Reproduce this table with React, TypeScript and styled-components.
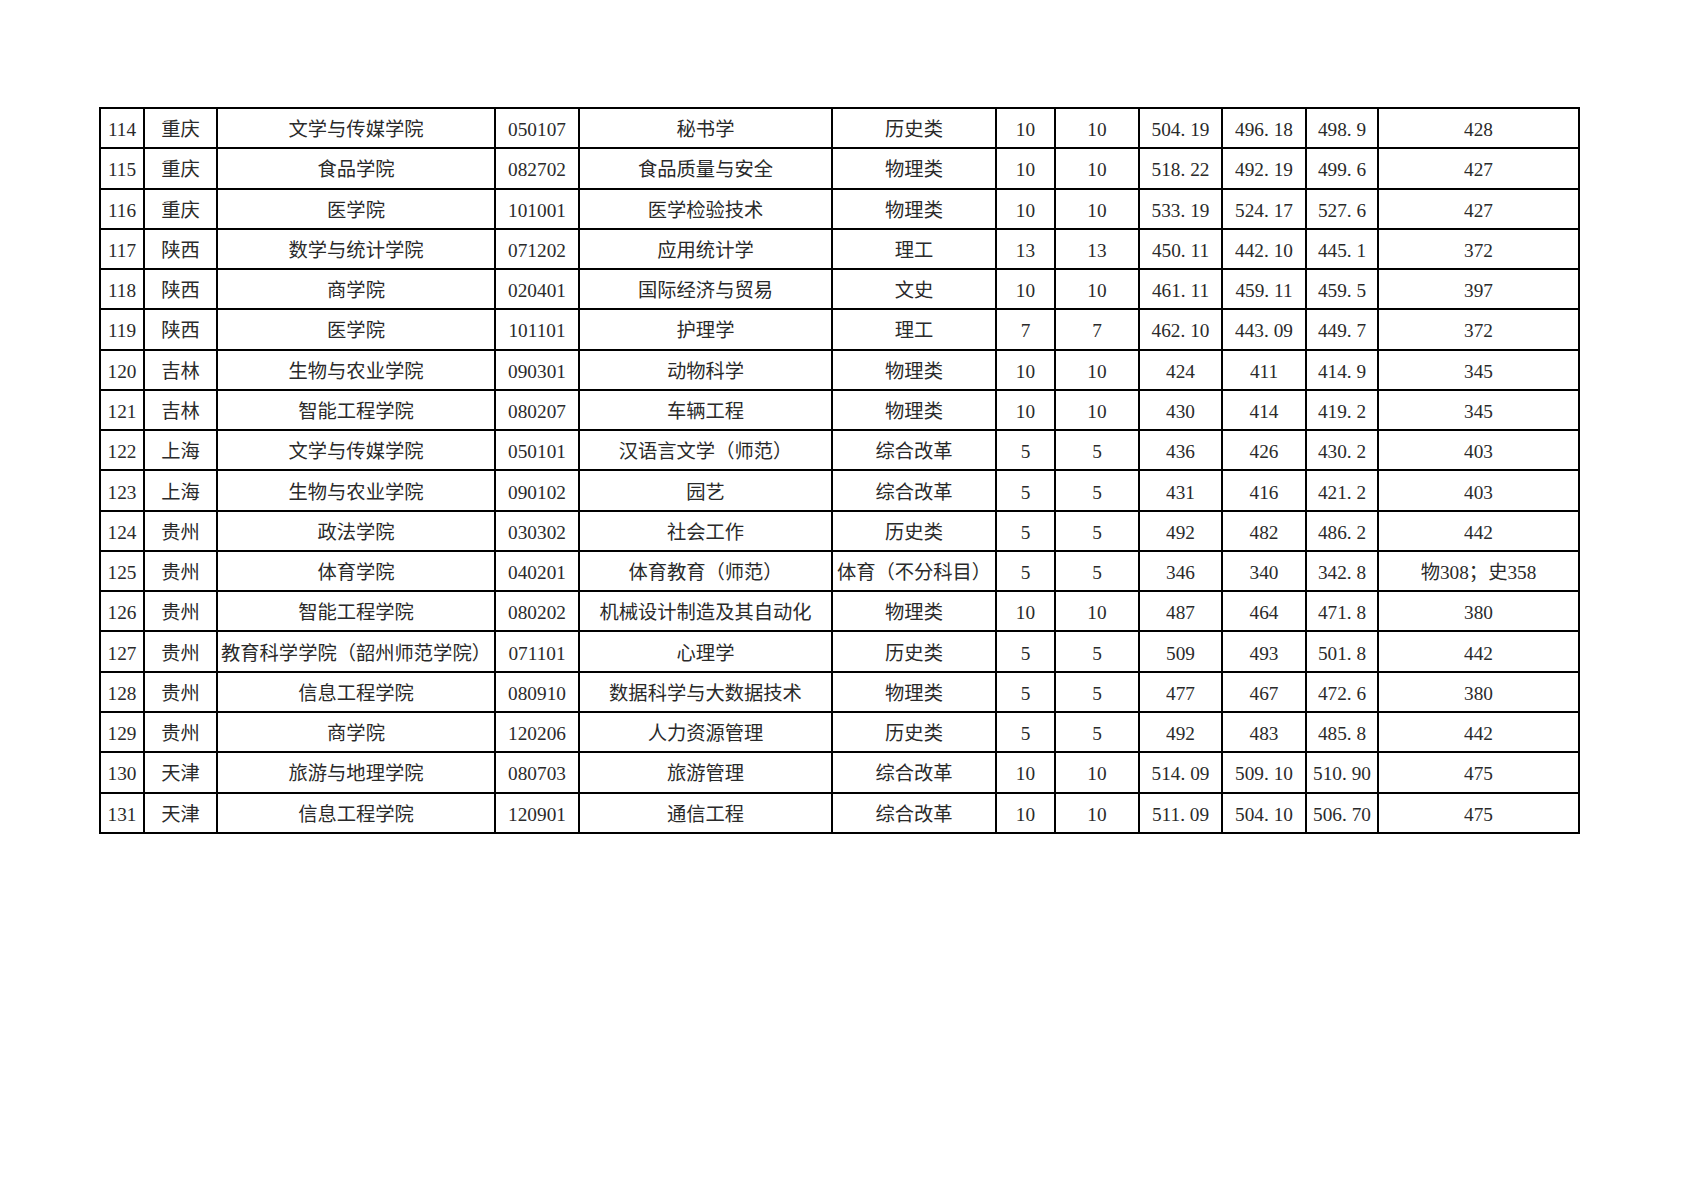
import React from "react";
import styled, { createGlobalStyle } from "styled-components";

const Global = createGlobalStyle`
  html, body { margin: 0; padding: 0; background: #ffffff; }
  body { font-family: "Liberation Serif", "Noto Sans CJK SC", serif; }
`;

const Page = styled.div`
  width: 1684px;
  height: 1191px;
  box-sizing: border-box;
  padding: 107px 0 0 99px;
  background: #ffffff;
`;

const Table = styled.table`
  border-collapse: collapse;
  table-layout: fixed;
  width: 1481px;
  border: 2px solid #000;
`;

const Row = styled.tr`
  height: 40.28px;
`;

const Cell = styled.td`
  border: 2px solid #000;
  padding: 3px 0 0 0;
  text-align: center;
  vertical-align: middle;
  font-family: "Liberation Serif", "Noto Sans CJK SC", serif;
  font-size: 19.3px;
  line-height: 21px;
  color: #2a2a2a;
  white-space: nowrap;
  overflow: hidden;
`;

const Dot = styled.span`
  margin-right: 0.25em;
`;

const widths = [44, 73, 278, 84, 253, 164, 59, 84, 83, 84, 72, 201];

const rows: string[][] = [
  ["114", "重庆", "文学与传媒学院", "050107", "秘书学", "历史类", "10", "10", "504.19", "496.18", "498.9", "428"],
  ["115", "重庆", "食品学院", "082702", "食品质量与安全", "物理类", "10", "10", "518.22", "492.19", "499.6", "427"],
  ["116", "重庆", "医学院", "101001", "医学检验技术", "物理类", "10", "10", "533.19", "524.17", "527.6", "427"],
  ["117", "陕西", "数学与统计学院", "071202", "应用统计学", "理工", "13", "13", "450.11", "442.10", "445.1", "372"],
  ["118", "陕西", "商学院", "020401", "国际经济与贸易", "文史", "10", "10", "461.11", "459.11", "459.5", "397"],
  ["119", "陕西", "医学院", "101101", "护理学", "理工", "7", "7", "462.10", "443.09", "449.7", "372"],
  ["120", "吉林", "生物与农业学院", "090301", "动物科学", "物理类", "10", "10", "424", "411", "414.9", "345"],
  ["121", "吉林", "智能工程学院", "080207", "车辆工程", "物理类", "10", "10", "430", "414", "419.2", "345"],
  ["122", "上海", "文学与传媒学院", "050101", "汉语言文学（师范）", "综合改革", "5", "5", "436", "426", "430.2", "403"],
  ["123", "上海", "生物与农业学院", "090102", "园艺", "综合改革", "5", "5", "431", "416", "421.2", "403"],
  ["124", "贵州", "政法学院", "030302", "社会工作", "历史类", "5", "5", "492", "482", "486.2", "442"],
  ["125", "贵州", "体育学院", "040201", "体育教育（师范）", "体育（不分科目）", "5", "5", "346", "340", "342.8", "物308；史358"],
  ["126", "贵州", "智能工程学院", "080202", "机械设计制造及其自动化", "物理类", "10", "10", "487", "464", "471.8", "380"],
  ["127", "贵州", "教育科学学院（韶州师范学院）", "071101", "心理学", "历史类", "5", "5", "509", "493", "501.8", "442"],
  ["128", "贵州", "信息工程学院", "080910", "数据科学与大数据技术", "物理类", "5", "5", "477", "467", "472.6", "380"],
  ["129", "贵州", "商学院", "120206", "人力资源管理", "历史类", "5", "5", "492", "483", "485.8", "442"],
  ["130", "天津", "旅游与地理学院", "080703", "旅游管理", "综合改革", "10", "10", "514.09", "509.10", "510.90", "475"],
  ["131", "天津", "信息工程学院", "120901", "通信工程", "综合改革", "10", "10", "511.09", "504.10", "506.70", "475"],
];

function renderValue(v: string) {
  const idx = v.indexOf(".");
  if (idx < 0) return v;
  return (
    <>
      {v.slice(0, idx)}
      <Dot>.</Dot>
      {v.slice(idx + 1)}
    </>
  );
}

export default function App() {
  return (
    <Page>
      <Global />
      <Table>
        <colgroup>
          {widths.map((w, i) => (
            <col key={i} style={{ width: w }} />
          ))}
        </colgroup>
        <tbody>
          {rows.map((r) => (
            <Row key={r[0]}>
              {r.map((c, i) => (
                <Cell key={i}>{renderValue(c)}</Cell>
              ))}
            </Row>
          ))}
        </tbody>
      </Table>
    </Page>
  );
}
